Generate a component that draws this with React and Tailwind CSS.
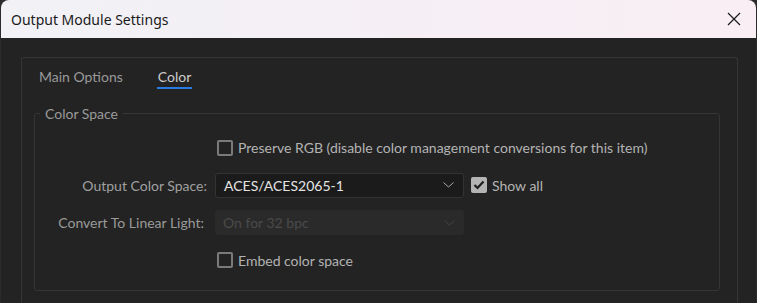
import React, { useState } from "react";

const Chevron = ({ disabled }) => (
  <svg width="11" height="6" viewBox="0 0 11 6" fill="none">
    <path
      d="M0.5 0.5 L5.5 5 L10.5 0.5"
      stroke={disabled ? "#434343" : "#a8a8a8"}
      strokeWidth="1"
    />
  </svg>
);

const CheckBox = ({ checked, label, onChange }) => (
  <label className="flex items-center cursor-pointer">
    <span
      onClick={onChange}
      className={`w-[16px] h-[16px] rounded-[2px] flex items-center justify-center ${
        checked ? "bg-[#b4b4b4]" : "border-2 border-[#7a7a7a]"
      }`}
    >
      {checked && (
        <svg width="12" height="10" viewBox="0 0 12 10" fill="none">
          <path d="M1.5 5 L4.5 8 L10.5 1.5" stroke="#1e1e1e" strokeWidth="2.2" />
        </svg>
      )}
    </span>
    <span className="ml-[5px] text-[#b3b3b3]">{label}</span>
  </label>
);

const Dropdown = ({ value, disabled }) => (
  <div
    className={`w-[249px] h-[25px] rounded-[3px] flex items-center justify-between pl-[8px] pr-[9px] ${
      disabled ? "bg-[#2a2a2a] text-[#4a4a4a]" : "bg-[#1b1b1b] border border-[#333333] text-[#e4e4e4]"
    }`}
  >
    <span>{value}</span>
    <Chevron disabled={disabled} />
  </div>
);

const App = () => {
  const [preserve, setPreserve] = useState(false);
  const [showAll, setShowAll] = useState(true);
  const [embed, setEmbed] = useState(false);

  return (
    <div
      className="w-[757px] h-[303px] bg-[#2b2b2b] overflow-hidden text-[14px]"
      style={{ fontFamily: "Lato, 'Liberation Sans', sans-serif" }}
    >
      <div className="ml-px w-[755px] h-full rounded-t-lg overflow-hidden flex flex-col">
        {/* title bar */}
        <div className="h-[38px] shrink-0 flex items-center justify-between pl-[10px] pr-[15px] bg-gradient-to-r from-[#f1f1f6] to-[#f9eef4]">
          <span
            className="text-[14px] text-[#1a1a1a]"
            style={{ fontFamily: "'Noto Sans', 'Liberation Sans', sans-serif" }}
          >
            Output Module Settings
          </span>
          <svg width="14" height="14" viewBox="0 0 14 14">
            <path d="M1 1 L13 13 M13 1 L1 13" stroke="#1a1a1a" strokeWidth="1.2" />
          </svg>
        </div>

        {/* body */}
        <div className="flex-1 bg-[#232323] pt-[19px] pl-[20px] pr-[18px]">
          <div className="h-full border border-b-0 border-[#353535] rounded-t-[3px] pl-[12px] pr-[17px]">
            {/* tabs */}
            <div className="flex h-[31px] pl-[5px] items-end">
              <div className="text-[#9a9a9a] pb-[2px]">Main Options</div>
              <div className="ml-[34px] px-px text-[#cccccc] border-b-2 border-[#2a7be0]">
                Color
              </div>
            </div>

            <fieldset className="mt-[14px] border border-[#353535] rounded-[3px] h-[188px]">
              <legend className="ml-[5px] px-[5px] text-[#9a9a9a]">Color Space</legend>

              <div className="flex flex-col gap-[12.5px] pt-[11px]">
                <div className="h-[25px] flex items-center pl-[182px]">
                  <CheckBox
                    checked={preserve}
                    onChange={() => setPreserve(!preserve)}
                    label="Preserve RGB (disable color management conversions for this item)"
                  />
                </div>

                <div className="h-[25px] flex items-center">
                  <div className="w-[172px] text-right text-[#a0a0a0]">Output Color Space:</div>
                  <div className="ml-[8px]">
                    <Dropdown value="ACES/ACES2065-1" />
                  </div>
                  <div className="ml-[7px]">
                    <CheckBox checked={showAll} onChange={() => setShowAll(!showAll)} label="Show all" />
                  </div>
                </div>

                <div className="h-[25px] flex items-center">
                  <div className="w-[169px] text-right text-[#9a9a9a]">Convert To Linear Light:</div>
                  <div className="ml-[11px]">
                    <Dropdown value="On for 32 bpc" disabled />
                  </div>
                </div>

                <div className="h-[25px] flex items-center pl-[182px]">
                  <CheckBox checked={embed} onChange={() => setEmbed(!embed)} label="Embed color space" />
                </div>
              </div>
            </fieldset>
          </div>
        </div>
      </div>
    </div>
  );
};

export default App;
